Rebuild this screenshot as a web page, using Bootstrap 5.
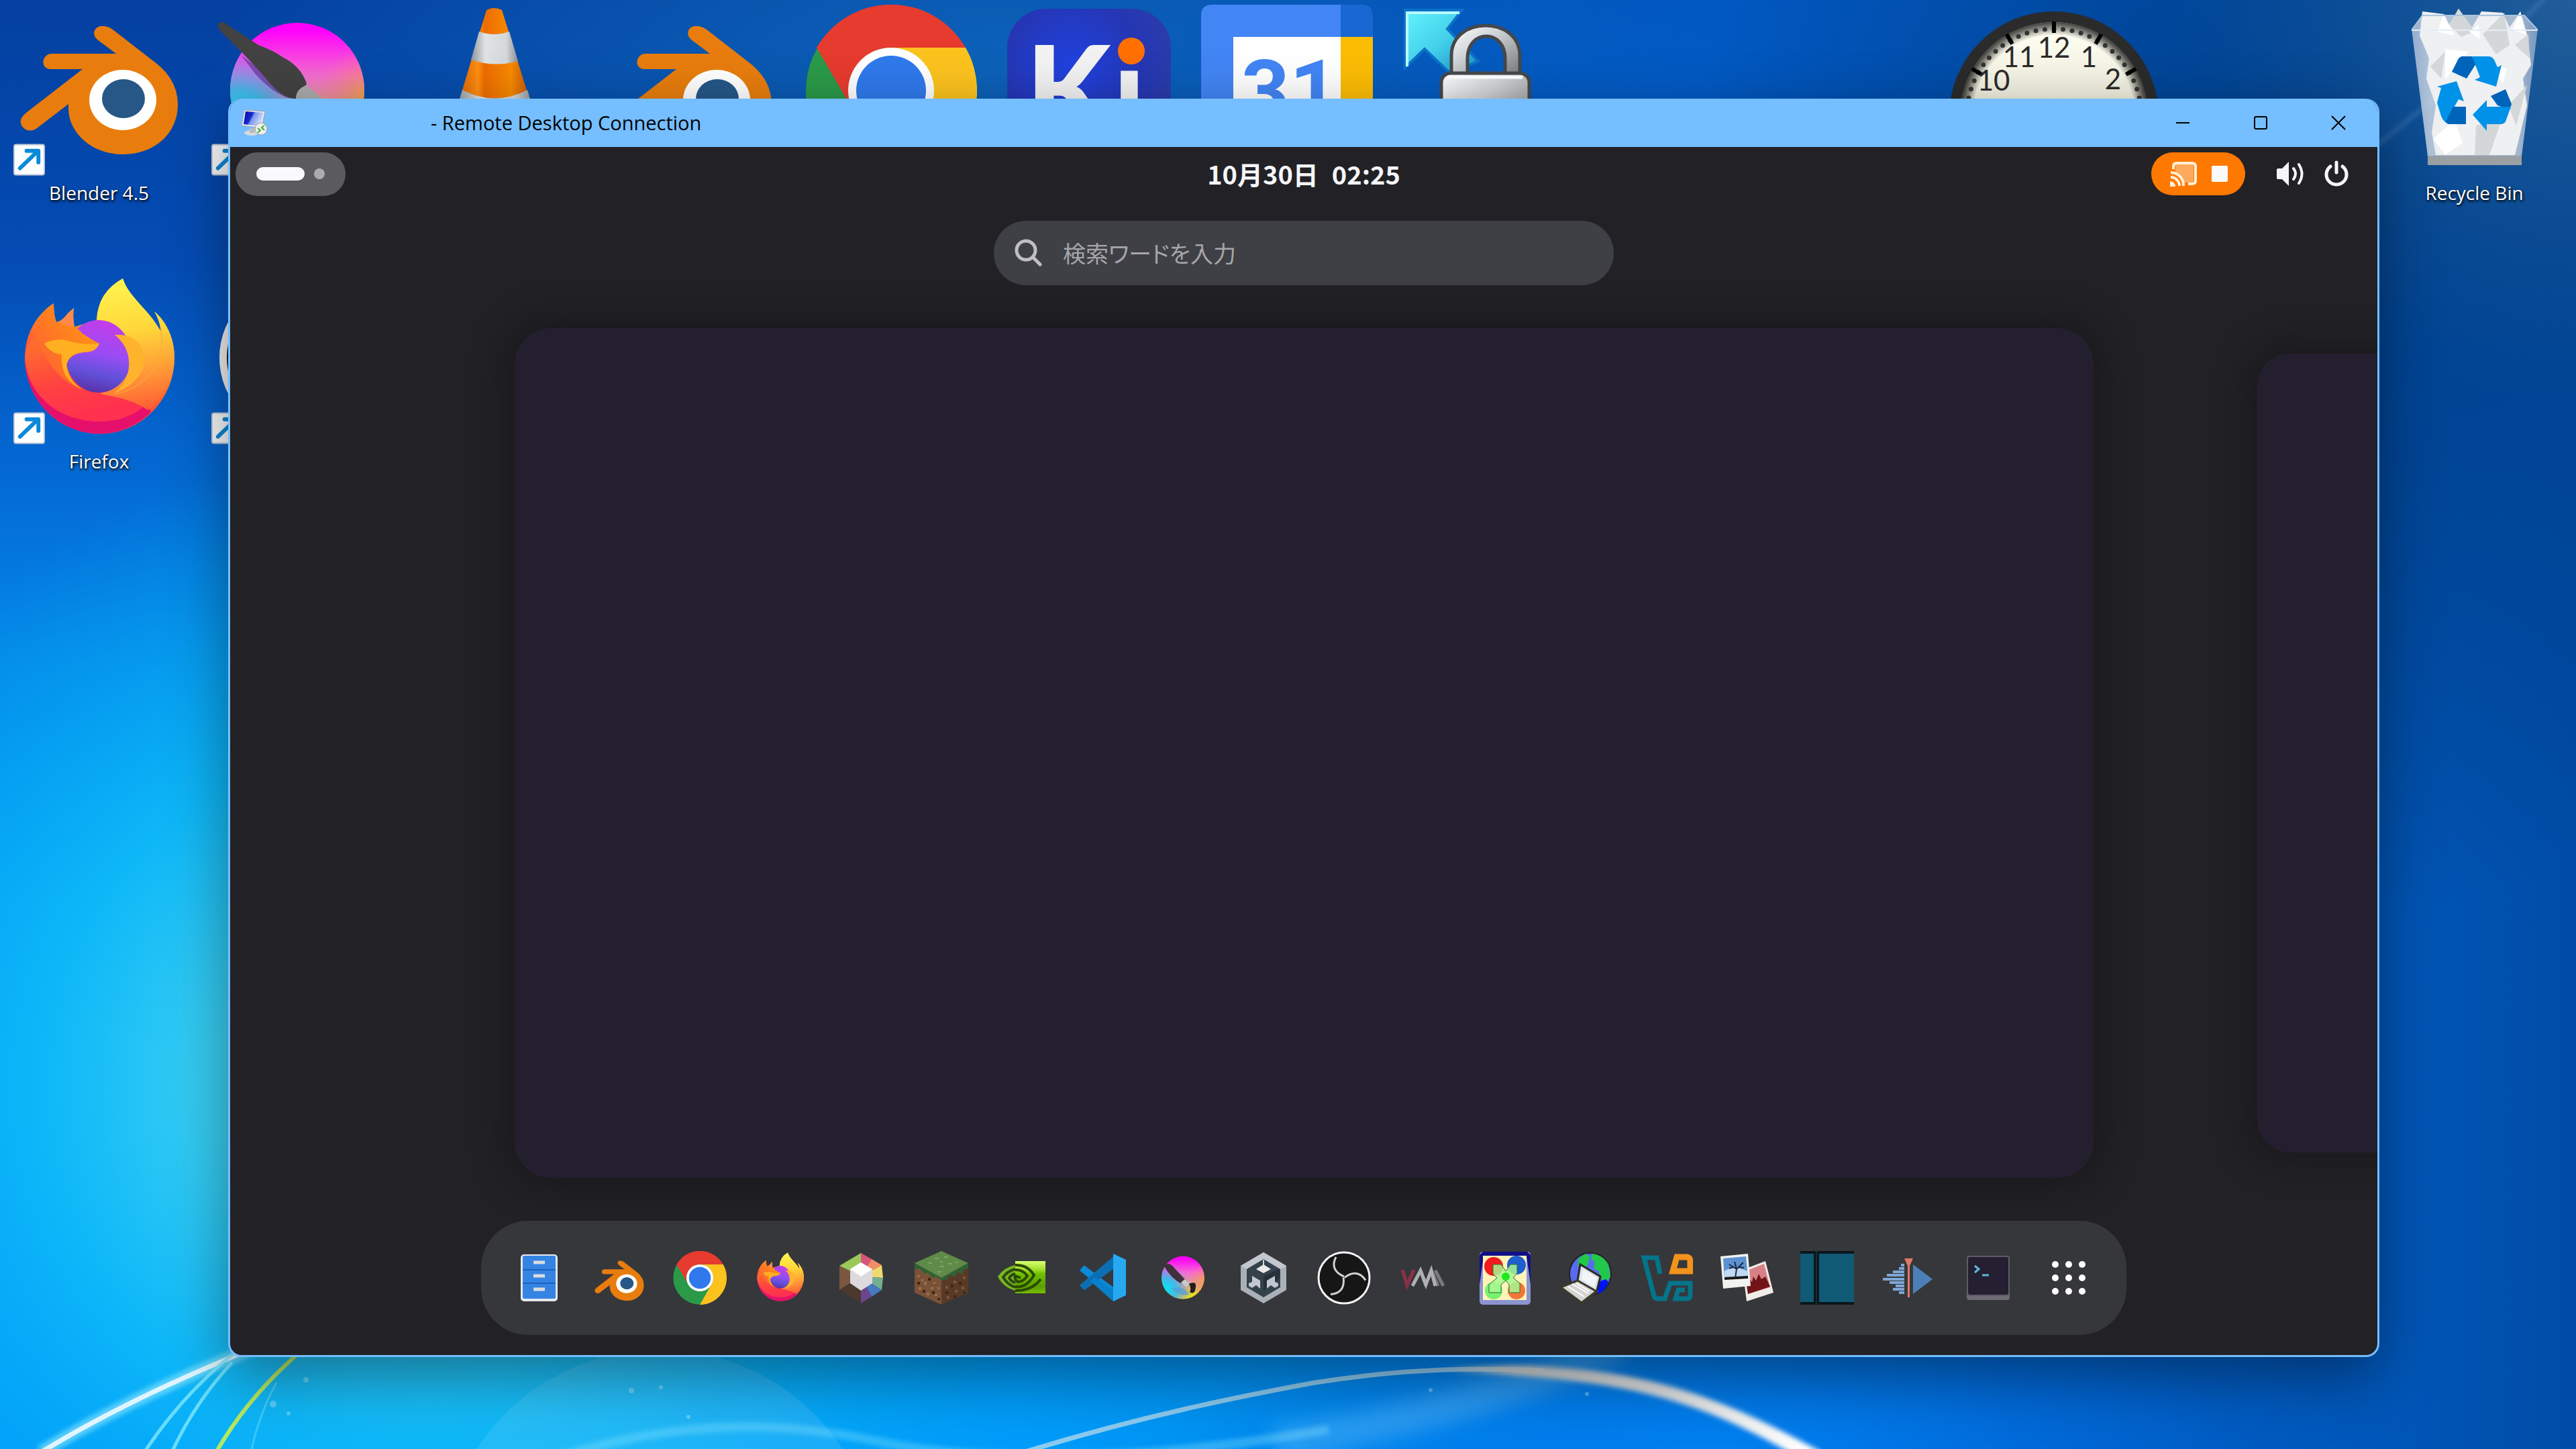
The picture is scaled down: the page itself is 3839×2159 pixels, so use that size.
<!DOCTYPE html>
<html lang="en">
<head>
<meta charset="utf-8">
<meta name="viewport" content="width=device-width, initial-scale=1">
<title>Remote Desktop Connection</title>
<link href="https://cdn.jsdelivr.net/npm/bootstrap@5.3.0/dist/css/bootstrap.min.css" rel="stylesheet">
<style>
  :root { --frame: #75beff; --shell: #222226; --light: #f6f6f9; }
  body { font-family: "Open Sans", "Noto Sans", sans-serif; background: #0a57b4; }
  .desktop { min-height: 100vh; }
  .wallpaper { inset: 0; width: 100%; height: 100%; }
  .icon-grid { display: grid; grid-template-columns: repeat(auto-fill, 295px); grid-auto-rows: 400px; padding-top: 7px; }
  .shortcut { color: #fff; font-size: 28px; line-height: 36px; text-shadow: 1px 2px 4px #000, 0 1px 2px rgba(0,0,0,.7); }
  .shortcut:hover { color: #fff; }
  .shortcut svg { width: 256px; height: 256px; overflow: visible; }
  .shortcut svg text { text-shadow: none; }
  .shortcut-name { margin-top: 6px; }
  .row-two { grid-row: 2; }
  .last-col { grid-column: -2; grid-row: 1; }
  .gadget { width: 312px; height: 312px; top: 17px; right: 622px; }
  .rdp { top: 147px; left: 340px; right: 293px; bottom: 137px; background: var(--shell); border: 3px solid var(--frame); border-top: 0; border-radius: 20px; box-shadow: 0 30px 90px 0 rgba(0,0,0,.42); }
  .titlebar { height: 72px; background: var(--frame); color: #000; font-size: 29px; padding-left: 16px; }
  .titlebar > svg { width: 40px; height: 40px; }
  .caption-text { margin-left: 243px; }
  .caption-btn { width: 116px; height: 72px; border: 0; background: transparent; padding: 0; }
  .caption-btn svg { display: block; margin: auto; width: 22px; height: 22px; }
  .shell { color: var(--light); }
  .topbar { height: 80px; padding: 0 8px; }
  .pill { width: 164px; height: 65px; background: #5b5b5f; border: 0; gap: 14px; }
  .pill-now { width: 72px; height: 20px; background: #fafafd; }
  .pill-next { width: 16px; height: 16px; background: #acacaf; }
  .shell-clock { font: 700 38px/48px "Noto Sans CJK JP", sans-serif; color: var(--light); gap: 20px; }
  .cast { width: 140px; height: 64px; background: #ff7800; border: 0; gap: 20px; }
  .cast svg, .status-icons svg { display: block; }
  .status-icons { border: 0; background: transparent; padding: 0; gap: 28px; margin-left: 45px; margin-right: 34px; }
  .finder { width: 924px; height: 96px; background: #3f4045; margin-top: 30px; padding: 0 30px; gap: 31px; }
  .finder input { background: transparent; border: 0; outline: 0; color: var(--light); font: 400 34px/48px "Noto Sans CJK JP", sans-serif; font-feature-settings: "palt"; }
  .finder input::placeholder { color: #a6a6aa; opacity: 1; }
  .workspaces { margin: 64px 0; padding-left: 13.25%; gap: 244px; }
  .space { flex: 0 0 84.75%; height: 100%; background: #241f2f; border: 0; border-radius: 54px; box-shadow: 0 0 52px 8px rgba(16,16,16,.55); }
  .space.smaller { height: 94%; border-radius: 48px; }
  .dash { height: 170px; background: #36373a; border-radius: 70px; padding: 0 46px; gap: 40px; margin-bottom: 30px; }
  .dash button { border: 0; background: transparent; padding: 0; width: 80px; height: 80px; }
  .dash svg { display: block; width: 80px; height: 80px; }
</style>
</head>
<body>
<svg class="position-absolute" width="0" height="0" aria-hidden="true">
  <defs>
    <linearGradient id="kr" x1="0" y1="0" x2="0" y2="1"><stop offset=".05" stop-color="#ff00fb"/><stop offset=".4" stop-color="#f470cf"/><stop offset=".6" stop-color="#e0a090"/><stop offset="1" stop-color="#e8f000"/></linearGradient>
    <radialGradient id="krc" gradientUnits="userSpaceOnUse" cx="40" cy="185" r="130"><stop offset="0" stop-color="#00e8f8"/><stop offset=".45" stop-color="#35b8f0" stop-opacity=".9"/><stop offset="1" stop-color="#b070ff" stop-opacity="0"/></radialGradient>
    <radialGradient id="kro" gradientUnits="userSpaceOnUse" cx="235" cy="140" r="80"><stop offset="0" stop-color="#f0a840"/><stop offset="1" stop-color="#ff6aa0" stop-opacity="0"/></radialGradient>
    <linearGradient id="ffb" x1=".75" y1="0" x2=".3" y2="1"><stop offset="0" stop-color="#ffe84a"/><stop offset=".3" stop-color="#ffa91f"/><stop offset=".55" stop-color="#ff6a2e"/><stop offset=".8" stop-color="#ff3647"/><stop offset="1" stop-color="#f01070"/></linearGradient>
    <linearGradient id="ffl" x1="0" y1=".2" x2=".3" y2="1"><stop offset="0" stop-color="#ff6a2e"/><stop offset=".5" stop-color="#ff4340"/><stop offset="1" stop-color="#ff3050"/></linearGradient>
    <linearGradient id="fff" x1=".4" y1="0" x2=".5" y2="1"><stop offset="0" stop-color="#fff44f"/><stop offset=".4" stop-color="#ffd63a"/><stop offset=".7" stop-color="#ffa037"/><stop offset="1" stop-color="#ff6035"/></linearGradient>
    <linearGradient id="ffh" x1="0" y1="1" x2="1" y2="0"><stop offset="0" stop-color="#ff5a38"/><stop offset=".5" stop-color="#ff7a22"/><stop offset="1" stop-color="#ffa313"/></linearGradient>
    <linearGradient id="ffg2" x1=".6" y1="0" x2=".4" y2="1"><stop offset="0" stop-color="#c53ce8"/><stop offset=".45" stop-color="#9a4cf5"/><stop offset=".75" stop-color="#6050d8"/><stop offset="1" stop-color="#5b30a8"/></linearGradient>
    <linearGradient id="vlc" x1="0" x2="1"><stop offset="0" stop-color="#d45500"/><stop offset=".3" stop-color="#ff9010"/><stop offset=".38" stop-color="#ee6c00"/><stop offset=".7" stop-color="#f98a00"/><stop offset="1" stop-color="#b84400"/></linearGradient>
    <linearGradient id="vlw" x1="0" x2="1"><stop offset="0" stop-color="#8e9499"/><stop offset=".3" stop-color="#e0e3e5"/><stop offset=".75" stop-color="#d4d8da"/><stop offset="1" stop-color="#8b8f92"/></linearGradient>
    <radialGradient id="ki" cx=".4" cy=".35" r=".7"><stop offset="0" stop-color="#1f42e0"/><stop offset=".6" stop-color="#2536b4"/><stop offset="1" stop-color="#2c3fa8"/></radialGradient>
    <linearGradient id="metal" x1="0" x2="1" y2="1"><stop offset="0" stop-color="#fff"/><stop offset=".4" stop-color="#cfd3d6"/><stop offset="1" stop-color="#77797c"/></linearGradient>
    <linearGradient id="arrow" x1="0" y1="0" x2="1" y2="1"><stop offset="0" stop-color="#62f4ff"/><stop offset=".5" stop-color="#44d0ea"/><stop offset="1" stop-color="#1a8fc8"/></linearGradient>
    <linearGradient id="face" x1="0" y1="0" x2="0" y2="1"><stop offset="0" stop-color="#fffff4"/><stop offset="1" stop-color="#d8d6bc"/></linearGradient>
    <radialGradient id="rim"><stop offset=".86" stop-color="#000" stop-opacity="0"/><stop offset="1" stop-color="#000" stop-opacity=".75"/></radialGradient>
    <linearGradient id="nv" x1="0" y1="0" x2="0" y2="1"><stop offset="0" stop-color="#d8ff70"/><stop offset=".25" stop-color="#a4e030"/><stop offset=".4" stop-color="#6fc000"/><stop offset=".8" stop-color="#5c9e00"/><stop offset="1" stop-color="#7ac000"/></linearGradient>
    <linearGradient id="scr" x1="0" y1="0" x2="1" y2=".4"><stop offset="0" stop-color="#0008a0"/><stop offset=".45" stop-color="#1528d0"/><stop offset=".55" stop-color="#7a94ec"/><stop offset="1" stop-color="#d0dcfa"/></linearGradient>
    <linearGradient id="bin" x1="0" x2="1"><stop offset="0" stop-color="#b5c4dc"/><stop offset=".15" stop-color="#d8e0ea"/><stop offset=".85" stop-color="#c8d0dc"/><stop offset="1" stop-color="#8fa6c8"/></linearGradient>

    <symbol id="i-blender" viewBox="0 0 256 256">
      <path d="M125 52C115 44 122 30 134 32Q141 32 148 37L215 89Q245 114 245 149C245 192 210 223 163 223C118 223 82 192 82 154V148L35 184C22 194 6 181 12 169Q14 165 19 161L103 96H55C40 96 41 73 58 73H153Z" fill="#e87d0d"/>
      <ellipse cx="163" cy="142" rx="50" ry="45" fill="#fff"/><ellipse cx="164" cy="140" rx="32" ry="29" fill="#265787"/>
    </symbol>
    <symbol id="i-chrome" viewBox="0 0 256 256">
      <circle cx="128" cy="128" r="127" fill="#2a9a49"/>
      <path d="M128 64H239A128 128 0 0 1 128 256L183 160A64 64 0 0 0 128 64Z" fill="#fcc31e"/>
      <path d="M17 64A128 128 0 0 1 239 64H128A64 64 0 0 0 73 160Z" fill="#e63b2e"/>
      <circle cx="128" cy="128" r="64" fill="#fff"/><circle cx="128" cy="128" r="52" fill="#2f79ec"/>
    </symbol>
    <symbol id="i-firefox" viewBox="0 0 256 256">
      <path d="M60 45Q60 62 64 73Q70 72 76 66Q82 58 90 52Q88 66 91 80L124 70Q126 28 163 8C172 36 200 52 220 87Q218 70 210 57C230 74 240 100 240 126A111 113 0 0 1 17 126C17 90 36 60 60 45Z" fill="url(#ffb)"/>
      <path d="M17 126A111 113 0 0 0 205 207L190 180Q150 214 90 190Z" fill="#e5106c"/>
      <path d="M17 126C20 180 66 221 128 221C176 221 212 196 222 150C205 176 180 180 150 180L60 130L36 90Q18 106 17 126Z" fill="url(#ffl)"/>
      <path d="M124 70Q126 28 163 8C172 36 200 52 220 87Q218 70 210 57C230 74 240 100 240 126C240 156 224 186 200 204C190 196 168 186 130 180L175 140Z" fill="url(#fff)"/>
      <path d="M220 87C226 130 200 172 150 180" fill="none" stroke="#ffa840" stroke-width="2" opacity=".6"/>
      <ellipse cx="127" cy="124" rx="49" ry="54" fill="url(#ffg2)"/>
      <path d="M151 92C180 90 195 108 195 130C195 150 175 172 150 178C172 166 186 120 151 92Z" fill="#ffb22c"/>
      <path d="M60 45Q60 62 64 73Q90 74 103 90Q115 98 128 105C124 114 118 118 104 118C88 120 80 128 79 140C82 156 92 168 102 173C80 165 60 150 40 110L30 84Q40 58 60 45Z" fill="url(#ffh)"/>
      <path d="M76 66Q82 58 90 52Q88 66 91 80L64 73Q70 72 76 66Z" fill="#ff8a4a"/>
      <path d="M46 105Q58 98 76 99Q100 108 128 105C124 114 118 117 104 118Q82 120 79 137C82 156 92 168 105 174C80 165 70 145 72 121Q56 120 46 105Z" fill="#ffb020"/>
    </symbol>
    <symbol id="i-shortcut" viewBox="0 0 48 48">
      <rect x="1" y="1" width="46" height="46" rx="3" fill="#fcfdfe" stroke="#c4c9d8" stroke-width="2"/>
      <path d="M10 37L35 13M20 10.500H38V28" fill="none" stroke="#0a8ad8" stroke-width="6" stroke-linejoin="round" stroke-linecap="round"/>
    </symbol>
  </defs>
</svg>

<main class="desktop position-relative overflow-hidden">
  <svg class="wallpaper position-absolute" viewBox="0 0 3839 2159" preserveAspectRatio="none" aria-hidden="true">
    <defs>
      <linearGradient id="sky" x1="0" y1="0" x2="0" y2="1"><stop offset="0" stop-color="#0440a0"/><stop offset=".18" stop-color="#044cb4"/><stop offset=".32" stop-color="#0468d2"/><stop offset=".46" stop-color="#0488e8"/><stop offset=".62" stop-color="#009cf4"/><stop offset=".85" stop-color="#009cfa"/><stop offset="1" stop-color="#009cfa"/></linearGradient>
      <linearGradient id="east" x1="0" x2="1"><stop offset=".4" stop-color="#0068d0" stop-opacity="0"/><stop offset=".6" stop-color="#0068d8" stop-opacity=".5"/><stop offset=".78" stop-color="#005cc8" stop-opacity=".9"/><stop offset=".93" stop-color="#0056b8"/><stop offset="1" stop-color="#004ca6"/></linearGradient>
      <radialGradient id="glow" gradientUnits="userSpaceOnUse" cx="0" cy="0" r="1" gradientTransform="translate(640 1620) scale(1050 960)"><stop offset="0" stop-color="#70e8f8"/><stop offset=".32" stop-color="#36cef4"/><stop offset=".55" stop-color="#10bcf8" stop-opacity=".85"/><stop offset="1" stop-color="#00a8f8" stop-opacity="0"/></radialGradient>
      <radialGradient id="topglow" gradientUnits="userSpaceOnUse" cx="0" cy="0" r="1" gradientTransform="translate(1500 100) scale(1200 500)"><stop offset="0" stop-color="#0c62b8"/><stop offset="1" stop-color="#0c62b8" stop-opacity="0"/></radialGradient>
      <radialGradient id="dusk" gradientUnits="userSpaceOnUse" cx="0" cy="0" r="1" gradientTransform="translate(3400 400) scale(900 1000)"><stop offset="0" stop-color="#003f8a" stop-opacity=".95"/><stop offset=".4" stop-color="#003f8a" stop-opacity=".7"/><stop offset="1" stop-color="#003a80" stop-opacity="0"/></radialGradient>
      <radialGradient id="haze" gradientUnits="userSpaceOnUse" cx="3839" cy="0" r="600"><stop offset="0" stop-color="#2a6498" stop-opacity=".8"/><stop offset="1" stop-color="#1a5490" stop-opacity="0"/></radialGradient>
      <radialGradient id="low" gradientUnits="userSpaceOnUse" cx="0" cy="0" r="1" gradientTransform="translate(2550 2159) scale(800 260)"><stop offset="0" stop-color="#0080f0"/><stop offset="1" stop-color="#0070e8" stop-opacity="0"/></radialGradient>
      <linearGradient id="fade" gradientUnits="userSpaceOnUse" x1="2150" y1="0" x2="2700" y2="0"><stop offset="0" stop-color="#d8dee2" stop-opacity="0"/><stop offset=".2" stop-color="#d0d4d6"/><stop offset=".6" stop-color="#e0e2e4"/><stop offset="1" stop-color="#fff"/></linearGradient>
      <filter id="soft" x="-20%" y="-20%" width="140%" height="140%"><feGaussianBlur stdDeviation="3"/></filter>
      <filter id="softer" x="-20%" y="-60%" width="140%" height="220%"><feGaussianBlur stdDeviation="14"/></filter>
    </defs>
    <rect width="3839" height="2159" fill="url(#sky)"/>
    <rect width="3839" height="2159" fill="url(#topglow)"/>
    <rect width="3839" height="2159" fill="url(#glow)"/>
    <rect width="3839" height="2159" fill="url(#east)"/>
    <rect width="3839" height="2159" fill="url(#dusk)"/>
    <rect width="3839" height="2159" fill="url(#haze)"/>
    <rect width="3839" height="2159" fill="url(#low)"/>
    <path d="M3500 250Q3680 110 3800 -10" stroke="#6f9cc8" stroke-opacity=".3" stroke-width="6" fill="none" filter="url(#soft)"/>
    <circle cx="983" cy="2336" r="325" fill="#c8f0ff" fill-opacity=".12"/>
    <path d="M1900 2150Q2180 2110 2420 2000" stroke="#80d0ff" stroke-opacity=".3" stroke-width="50" fill="none" filter="url(#softer)"/>
    <path d="M780 2190Q1040 2090 1300 2146T1980 2130" stroke="#90e8ff" stroke-opacity=".32" stroke-width="14" fill="none" filter="url(#soft)"/>
    <path d="M61 2164Q190 2085 370 2012" stroke="#8fe6ff" stroke-opacity=".6" stroke-width="20" fill="none" filter="url(#soft)"/>
    <path d="M61 2164Q190 2085 370 2012" stroke="#e0f5ff" stroke-width="7" fill="none"/>
    <path d="M215 2164Q270 2080 350 2015M256 2164Q290 2090 346 2030" stroke="#80e8ff" stroke-opacity=".8" stroke-width="5" fill="none"/>
    <path d="M322 2164Q370 2080 450 2012" stroke="#b6e860" stroke-width="6" fill="none"/>
    <path d="M374 2164Q385 2110 412 2060" stroke="#80e8ff" stroke-opacity=".4" stroke-width="3" fill="none"/>
    <path d="M1525 2164C1700 2110 1850 2080 1960 2060C2100 2038 2200 2038 2300 2042" stroke="#b8dcec" stroke-opacity=".75" stroke-width="7" fill="none"/>
    <path d="M2150 2038C2420 2026 2540 2070 2712 2164H2670C2530 2084 2420 2050 2150 2043Z" fill="url(#fade)" stroke="url(#fade)" stroke-opacity=".4" stroke-width="8" filter="url(#soft)"/>
    <g fill="#c0f0ff" fill-opacity=".4"><circle cx="407" cy="2092" r="5"/><circle cx="456" cy="2056" r="4"/><circle cx="941" cy="2072" r="4"/><circle cx="430" cy="2106" r="3"/><circle cx="985" cy="2067" r="3"/><circle cx="1026" cy="2111" r="3"/><circle cx="2132" cy="2071" r="3"/><circle cx="2365" cy="2077" r="3"/></g>
  </svg>

  <nav class="icon-grid position-relative" aria-label="Desktop">
    <a href="#" class="shortcut d-flex flex-column align-items-center text-decoration-none">
      <svg viewBox="0 0 256 256"><use href="#i-blender"/><use href="#i-shortcut" x="0" y="207" width="47" height="48"/></svg>
      <span class="shortcut-name">Blender 4.5</span>
    </a>
    <a href="#" class="shortcut d-flex flex-column align-items-center" aria-label="Krita">
      <svg viewBox="0 0 256 256">
        <circle cx="128" cy="127" r="100" fill="url(#kr)"/><circle cx="128" cy="127" r="100" fill="url(#kro)"/><circle cx="128" cy="127" r="100" fill="url(#krc)"/>
        <path d="M45 76L132 140L115 139Q92 132 66 104Z" fill="#5a2a90" opacity=".6"/>
        <path d="M10 34C8 24 18 24 24 30L70 60Q92 68 106 78Q134 92 142 118L126 140Q108 140 88 118Q60 84 14 40Z" fill="#424242"/>
        <path d="M141 120L165 140H126Q126 126 141 120Z" fill="#acacac"/>
        <use href="#i-shortcut" x="0" y="207" width="47" height="48"/>
      </svg>
    </a>
    <a href="#" class="shortcut d-flex flex-column align-items-center" aria-label="VLC">
      <svg viewBox="0 0 256 256">
        <path d="M115 8Q126 2 138 8L188 170H66Z" fill="url(#vlc)"/>
        <path d="M104 40Q127 48 149 40L162 84Q127 94 92 82Z" fill="url(#vlw)"/>
        <path d="M79 127Q127 152 176 127L186 160H69Z" fill="url(#vlw)"/>
      </svg>
    </a>
    <a href="#" class="shortcut d-flex flex-column align-items-center" aria-label="Blender"><svg viewBox="0 0 256 256"><use href="#i-blender"/></svg></a>
    <a href="#" class="shortcut d-flex flex-column align-items-center" aria-label="Chrome"><svg viewBox="0 0 256 256"><use href="#i-chrome"/></svg></a>
    <a href="#" class="shortcut d-flex flex-column align-items-center" aria-label="KiCad">
      <svg viewBox="0 0 256 256">
        <rect x="6" y="6" width="244" height="244" rx="58" fill="url(#ki)"/>
        <g font-family="Lato, sans-serif" font-weight="900" font-size="183" fill="#f2f2f2"><text x="34" y="193">K</text><text x="164" y="193">ı</text></g>
        <circle cx="191" cy="69" r="20" fill="#ff7000"/>
      </svg>
    </a>
    <a href="#" class="shortcut d-flex flex-column align-items-center" aria-label="Calendar">
      <svg viewBox="0 0 256 256">
        <path d="M16 0H208V48H48V256H0V16Q0 0 16 0Z" fill="#4285f4"/><path d="M208 0H240Q256 0 256 20V48H208Z" fill="#1967d2"/>
        <path d="M208 48H256V208H208Z" fill="#fbbc04"/><path d="M48 48H208V208H48Z" fill="#fff"/>
        <text x="132" y="172" text-anchor="middle" font-family="Roboto, sans-serif" font-weight="700" font-size="126" fill="#4285f4">31</text>
      </svg>
    </a>
    <a href="#" class="shortcut d-flex flex-column align-items-center" aria-label="Lock">
      <svg viewBox="0 0 256 256">
        <path d="M9 8H94L72 36L118 84L76 102L38 66L9 94Z" fill="url(#arrow)" stroke="#0b72c8" stroke-width="4"/><path d="M12 92V12H90" fill="none" stroke="#b8f8ff" stroke-width="4"/>
        <path d="M78 106V76C78 16 180 16 180 76V106H158V80C158 36 102 36 102 80V106Z" fill="url(#metal)" stroke="#45484b" stroke-width="5"/>
        <rect x="63" y="102" width="131" height="110" rx="14" fill="url(#metal)" stroke="#45484b" stroke-width="5"/><path d="M72 108H184" stroke="#fff" stroke-width="5"/>
      </svg>
    </a>
    <a href="#" class="shortcut last-col d-flex flex-column align-items-center text-decoration-none">
      <svg viewBox="0 0 256 256">
        <path d="M34 36L50 16H202L222 36L198 226V239H58V226Z" fill="url(#bin)" fill-opacity=".8"/>
        <path d="M50 10L82 14L90 30L104 6L124 34L138 10L170 12L180 34L196 10L206 44L212 90L200 110L206 150L194 200L188 224H70L64 190L70 150L56 110L60 80L46 46Z" fill="#eef0f2"/>
        <path d="M90 30L104 6L128 40L108 48ZM140 44L172 12L180 60L160 74ZM188 60L208 44L210 80ZM130 180L168 172L150 224H128ZM178 150L206 120L190 180ZM62 92L84 70L78 110Z" fill="#d4d7d8"/>
        <path d="M82 14L98 46L72 40ZM184 38L196 10L204 44ZM84 66L120 70L104 84L84 112ZM66 200L98 172L110 206L84 224ZM150 86L176 96L170 118ZM120 40L134 30L136 52Z" fill="#fff"/>
        <path d="M34 38H222" stroke="#e4edf5" stroke-width="2"/><path d="M34 38L50 16H202L222 38" fill="none" stroke="#a9c4dd" stroke-width="2"/>
        <path d="M58 225H198V239H58Z" fill="#9ba0a4"/>
        <path d="M94 100L104 80Q108 76 114 77L124 77L130 88L116 110Z" fill="#0064ba"/><path d="M124 77H148Q154 77 157 82L162 93L168 90L160 122L128 112L136 108Z" fill="#0091e8"/>
        <path d="M72 122L101 114L112 144L104 141L96 155L90 178Q82 176 78 166L72 146L78 124Z" fill="#0091e8"/><path d="M96 152H115V178H92Q86 178 85 174Z" fill="#0064ba"/>
        <path d="M174 126L183 148Q182 153 178 156L162 150L152 136Z" fill="#0064ba"/><path d="M125 164L146 142V152H182L174 174Q172 178 166 178H146V188Z" fill="#0091e8"/>
      </svg>
      <span class="shortcut-name">Recycle Bin</span>
    </a>
    <a href="#" class="shortcut row-two d-flex flex-column align-items-center text-decoration-none">
      <svg viewBox="0 0 256 256"><use href="#i-firefox"/><use href="#i-shortcut" x="0" y="207" width="47" height="48"/></svg>
      <span class="shortcut-name">Firefox</span>
    </a>
    <a href="#" class="shortcut row-two d-flex flex-column align-items-center" aria-label="OBS Studio">
      <svg viewBox="0 0 256 256"><circle cx="128" cy="126" r="116" fill="#f4f4f4"/><circle cx="128" cy="126" r="105" fill="#1c1c1e"/><use href="#i-shortcut" x="0" y="207" width="47" height="48"/></svg>
    </a>
  </nav>

  <svg class="gadget position-absolute" viewBox="-156 -156 312 312" role="img" aria-label="Clock">
    <circle r="156" fill="#2b2b2b"/><circle r="140" fill="url(#face)"/><circle r="140" fill="url(#rim)"/>
    <circle r="130" fill="none" stroke="#333" stroke-width="7" stroke-linecap="round" pathLength="60" stroke-dasharray="0 1"/>
    <g stroke="#000" stroke-width="6"><path d="M0 -141V-124"/><path d="M0 -141V-124" transform="rotate(30)"/><path d="M0 -141V-124" transform="rotate(60)"/><path d="M0 -141V-124" transform="rotate(-30)"/><path d="M0 -141V-124" transform="rotate(-60)"/></g>
    <g font-family="Lato, sans-serif" font-size="42" fill="#2b2b2b" text-anchor="middle"><text x="0" y="-87">12</text><text x="52" y="-73">1</text><text x="88" y="-40">2</text><text x="-52" y="-73">11</text><text x="-90" y="-38">10</text></g>
  </svg>

  <section class="rdp position-absolute d-flex flex-column overflow-hidden" aria-label="Remote Desktop Connection window">
    <header class="titlebar d-flex align-items-center flex-shrink-0">
      <svg viewBox="0 0 40 40" aria-hidden="true"><ellipse cx="16" cy="35" rx="11" ry="4" fill="#d8dade"/><path d="M12 28H22L20 35H13Z" fill="#b8bcc2"/><path d="M5 1L36 3L31 28L1 24Z" fill="#e8e8ec" stroke="#a0a4b0"/><path d="M7 3L33 5L29 25L4 22Z" fill="url(#scr)"/><circle cx="30" cy="29" r="9" fill="#eef0ee" stroke="#9a9e9a" stroke-width="1"/><path d="M25 28L29 31L25 35M35 24L31 27L35 31" fill="none" stroke="#3fae3a" stroke-width="2"/></svg>
      <span class="caption-text">- Remote Desktop Connection</span>
      <div class="d-flex ms-auto">
        <button class="caption-btn" aria-label="Minimize"><svg viewBox="0 0 22 22"><path d="M1 11H21" stroke="#000" stroke-width="2"/></svg></button>
        <button class="caption-btn" aria-label="Maximize"><svg viewBox="0 0 22 22"><rect x="2" y="2" width="18" height="18" rx="2" fill="none" stroke="#000" stroke-width="2"/></svg></button>
        <button class="caption-btn" aria-label="Close"><svg viewBox="0 0 22 22"><path d="M1 1L21 21M21 1L1 21" stroke="#000" stroke-width="2"/></svg></button>
      </div>
    </header>

    <div class="shell flex-grow-1 d-flex flex-column align-items-center overflow-hidden">
      <div class="topbar w-100 d-flex align-items-center flex-shrink-0">
        <div class="col"><button class="pill rounded-pill d-flex align-items-center justify-content-center" aria-label="Activities"><span class="pill-now rounded-pill"></span><span class="pill-next rounded-circle"></span></button></div>
        <div class="shell-clock d-flex"><span>10月30日</span><span>02:25</span></div>
        <div class="col d-flex align-items-center justify-content-end">
          <button class="cast rounded-pill d-flex align-items-center justify-content-center" aria-label="Stop screen sharing">
            <svg width="44" height="40" viewBox="0 0 44 40"><path d="M10 14V8Q10 6 12 6H35Q37 6 37 8V31Q37 33 35 33H24L10 19Z" fill="#ffa95c"/><path d="M7 13V9Q7 4 12 4H35Q40 4 40 9V30Q40 35 35 35H29" fill="none" stroke="#fff0d8" stroke-width="4"/><path d="M3 18A19 19 0 0 1 22 38M3 25A13 13 0 0 1 16 38" fill="none" stroke="#fff0d8" stroke-width="4"/><path d="M2 31A8 8 0 0 1 10 39H2Z" fill="#fff0d8"/></svg>
            <svg width="24" height="24" viewBox="0 0 24 24"><rect width="24" height="24" rx="2" fill="#fafafc"/></svg>
          </button>
          <button class="status-icons d-flex align-items-center" aria-label="System menu">
            <svg width="44" height="40" viewBox="0 0 44 40" fill="none" stroke="#f6f6f9" stroke-width="4" stroke-linecap="round"><path d="M2 14Q2 12 4 12H10L20 2V38L10 28H4Q2 28 2 26Z" fill="#f6f6f9" stroke="none"/><path d="M27 12Q33 20 27 28M35 6Q44 20 35 34"/></svg>
            <svg width="38" height="40" viewBox="0 0 38 40" fill="none" stroke="#f6f6f9" stroke-width="5" stroke-linecap="round"><path d="M19 3V18M10 9A15 15 0 1 0 28 9"/></svg>
          </button>
        </div>
      </div>

      <label class="finder rounded-pill d-flex align-items-center flex-shrink-0">
        <svg width="42" height="42" viewBox="0 0 42 42" fill="none" stroke="#c0c0c4" stroke-width="5" aria-hidden="true"><circle cx="18" cy="17" r="14"/><path d="M28 27L39 38" stroke-linecap="round"/></svg>
        <input class="flex-grow-1 p-0" type="text" placeholder="検索ワードを入力" lang="ja" aria-label="Search">
      </label>

      <div class="workspaces w-100 flex-grow-1 d-flex align-items-center">
        <button class="space" aria-label="Workspace 1"></button>
        <button class="space smaller" aria-label="Workspace 2"></button>
      </div>

      <nav class="dash d-flex align-items-center flex-shrink-0" aria-label="Dash">
        <button aria-label="Files"><svg viewBox="0 0 80 80"><rect x="13" y="5" width="55" height="70" rx="5" fill="#e4e8ee"/><rect x="16" y="7" width="49" height="64" rx="2" fill="#3584e4"/><path d="M16 28H65M16 48H65" stroke="#1c62bd" stroke-width="2"/><path d="M32 17H49M32 37H49M32 57H49" stroke="#d8dce0" stroke-width="5"/></svg></button>
        <button aria-label="Blender"><svg viewBox="0 0 256 256"><g transform="translate(0 14)"><use href="#i-blender" width="256" height="256"/></g></svg></button>
        <button aria-label="Chrome"><svg viewBox="0 0 256 256"><use href="#i-chrome"/></svg></button>
        <button aria-label="Firefox"><svg viewBox="0 0 256 256"><use href="#i-firefox"/></svg></button>
        <button aria-label="Prism Launcher"><svg viewBox="0 0 80 80"><path d="M40 38V3L8 22Z" fill="#9ac95a"/><path d="M40 38L8 22V58Z" fill="#7b5640"/><path d="M40 38L8 58L40 78Z" fill="#4c382d"/><path d="M40 38V3L56 12Z" fill="#d9557b"/><path d="M40 38L56 12L71 21Z" fill="#f38d68"/><path d="M40 38L71 21L73 40Z" fill="#f0da70"/><path d="M40 38L73 40L71 58Z" fill="#72b090"/><path d="M40 38L71 58L56 68Z" fill="#4779c0"/><path d="M40 38L56 68L40 78Z" fill="#6a478c"/><path d="M40 17L57 27V48L40 59L24 48V27Z" fill="#dcdadc"/><path d="M40 17L57 27L40 38L24 27Z" fill="#fff"/></svg></button>
        <button aria-label="Minecraft"><svg viewBox="0 0 80 80"><path d="M0 17L40 38V80L0 62Z" fill="#7a5238"/><path d="M80 17L40 38V80L80 62Z" fill="#593a26"/><path d="M40 0L80 18L40 40L0 18Z" fill="#5f8a48"/><path d="M0 18L40 40L80 18V26L72 28V34L62 32V38L50 36V42L40 44L32 38L26 40L20 32L14 34L8 26L0 28Z" fill="#2e6236"/><g fill="#9a7050"><path d="M4 36H8V39H4ZM14 46H18V50H14ZM24 54H28V57H24ZM6 54H10V58H6ZM30 64H34V67H30ZM18 62H22V66H18ZM10 42H13V45H10ZM28 46H31V49H28ZM34 54H37V57H34Z"/></g><g fill="#3c2517"><path d="M4 46H8V50H4ZM20 40H24V44H20ZM26 60H30V64H26ZM12 58H16V62H12ZM34 70H38V73H34ZM54 50H58V54H54ZM66 46H70V50H66ZM46 60H50V64H46ZM72 60H76V63H72ZM58 66H62V70H58Z"/></g><g fill="#7d5638"><path d="M46 52H50V56H46ZM58 44H62V48H58ZM72 38H76V42H72ZM60 58H64V62H60ZM48 67H52V71H48ZM70 53H74V57H70Z"/></g><g fill="#7da860"><path d="M30 10H36V12H30ZM44 8H50V10H44ZM50 18H56V20H50ZM20 17H26V19H20ZM38 22H44V24H38ZM34 30H40V32H34ZM38 15H42V17H38ZM60 16H64V18H60Z"/></g></svg></button>
        <button aria-label="NVIDIA Settings"><svg viewBox="0 0 80 80"><path d="M30 15H75V63H30Z" fill="url(#nv)"/><path d="M4 38Q14 24 30 21V59Q12 54 4 38Z" fill="#79b821"/><g fill="none" stroke-width="4"><path d="M30 27Q18 30 12 39Q18 50 30 54M30 34Q24 35 21 40Q24 46 30 47" stroke="#2f4a10"/><path d="M30 21Q48 20 58 36Q46 56 30 53M30 28Q42 28 48 37Q42 46 34 46Q28 42 30 37L38 40M30 59Q54 60 68 42" stroke="#2c4a00"/></g></svg></button>
        <button aria-label="Visual Studio Code"><svg viewBox="0 0 80 80"><path d="M6 29L12 22Q13 21 15 23L60 57V74Z" fill="#0a8ad8"/><path d="M6 51L12 58Q13 59 15 57L60 24V5Z" fill="#0b6fb4"/><path d="M56 75V4L75 13V66Z" fill="#27a9f2"/><path d="M56 75L22 45L28 40L56 58Z" fill="#0a80cc"/></svg></button>
        <button aria-label="Krita"><svg viewBox="0 0 256 256"><circle cx="128" cy="127" r="102" fill="url(#kr)"/><circle cx="128" cy="127" r="102" fill="url(#kro)"/><circle cx="128" cy="127" r="102" fill="url(#krc)"/><path d="M38 72Q60 46 88 82L142 140L120 156Q70 130 38 72Z" fill="#40303a"/><path d="M136 134L160 156L144 172L118 150Z" fill="#c8c8c8"/><path d="M156 156Q196 140 188 176Q184 210 160 196Q170 176 156 156Z" fill="#202020"/><path d="M74 180Q130 160 158 206Q120 222 74 180Z" fill="#50a0d8" opacity=".7"/></svg></button>
        <button aria-label="Unity Hub"><svg viewBox="0 0 80 80"><path d="M40 2L74 22V58L40 78L6 58V22Z" fill="#a9b0b7"/><path d="M40 2L74 22L40 40L6 22Z" fill="#c2c8ce"/><path d="M40 12L65 27V54L40 69L15 54V27Z" fill="#35424c"/><path d="M40 13V24" stroke="#d0d4d8" stroke-width="2"/><path d="M40 20L51 27L40 33L29 27Z" fill="#e8eaec"/><path d="M40 38L64 26V40L40 60Z" fill="#26313a"/><path d="M23 37L35 44V56L29 51L23 55L18 52V48L23 46ZM57 37L45 44V56L51 51L57 55L62 52V48L57 46Z" fill="#c2c8ce"/></svg></button>
        <button aria-label="OBS Studio"><svg viewBox="0 0 80 80"><circle cx="40" cy="40" r="38" fill="#161616" stroke="#f4f4f4" stroke-width="3"/><g fill="none" stroke="#d0d0d0" stroke-width="3"><path d="M40 38C26 32 21 22 28 9"/><path d="M40 38C26 32 21 22 28 9" transform="rotate(120 40 39)"/><path d="M40 38C26 32 21 22 28 9" transform="rotate(240 40 39)"/></g></svg></button>
        <button aria-label="Virtual Machine Manager"><svg viewBox="0 0 80 80" fill="none" stroke-width="5"><path d="M7 28L14 51L24 28" stroke="#8c3048"/><path d="M34 29L42 52M50 29L60 52M56 29L68 52" stroke="#7a7a7c"/><path d="M22 52L34 29L42 50L50 29L56 52" stroke="#b0b0b2"/></svg></button>
        <button aria-label="Puzzle"><svg viewBox="0 0 80 80"><rect x="2" y="1" width="76" height="79" rx="5" fill="#8c94d0"/><path d="M7 1H73L78 6V50L72 8H8L2 50V6Z" fill="#101088"/><rect x="7" y="7" width="65" height="66" fill="#fff4b8"/><circle cx="23" cy="23" r="14" fill="#f21c1c"/><circle cx="57" cy="21" r="14" fill="#1f5ed0"/><circle cx="23" cy="59" r="13" fill="#78f070"/><circle cx="57" cy="59" r="13" fill="#f2763a"/><path d="M22 20H34L41 30L48 20H58V33L52 40L62 48V62H46V50L41 44L34 50V62H16V50L28 40L22 34Z" fill="#a8f890" fill-opacity=".85" stroke="#287028" stroke-width="1"/><circle cx="41" cy="38" r="6" fill="#20e820"/></svg></button>
        <button aria-label="Remote Viewer"><svg viewBox="0 0 80 80"><circle cx="47" cy="34" r="31" fill="#5a6af0" stroke="#222" stroke-width="2"/><path d="M30 10L40 4L46 8L44 20L36 26L28 22ZM50 4Q66 6 74 20L77 38L70 48L62 40L60 30L52 26L54 16L48 12Z" fill="#22c84a"/><path d="M60 46L70 42L74 46Q70 60 58 64Z" fill="#0014f0"/><path d="M32 20L62 38L56 62L28 44Z" fill="#dfe3ea" stroke="#2a2a22" stroke-width="3"/><path d="M36 27L57 40L53 54L34 42Z" fill="#f2f6fa"/><path d="M28 44L56 60L34 77L3 54Z" fill="#d4d4d4" stroke="#3a3a2a" stroke-width="3"/><path d="M14 53L38 68M20 49L44 63M26 48L46 60" stroke="#fff" stroke-width="2"/></svg></button>
        <button aria-label="Virtual Bridge"><svg viewBox="0 0 80 80" fill="none" stroke-width="7"><path d="M31 34L26 10H7L22 67Q23 71 28 71H38L46 48H76V66Q76 71 70 71H54L58 58H68" stroke="#04758a"/><path d="M50 30L56 9H70Q76 9 76 16V30Z" stroke="#f2931c" stroke-width="9"/></svg></button>
        <button aria-label="Photos"><svg viewBox="0 0 80 80"><path d="M34 28L68 15L80 62L40 75Z" fill="#f0ede8"/><path d="M38 30L66 19L75 54L42 64Z" fill="#d88088"/><path d="M39 46L44 42L48 46L50 38L54 44L58 34L62 42L68 38L75 53L42 64Z" fill="#701418"/><path d="M1 8L42 4L46 52L5 56Z" fill="#f2f2ee"/><path d="M5 11L39 8L42 40L7 42Z" fill="#5c92d0"/><path d="M7 30Q20 20 41 30L42 40L7 42Z" fill="#c0d8f2"/><path d="M7 39L42 37V41L7 43Z" fill="#181818"/><path d="M23 40L25 27L14 20M25 27L35 17M25 27L22 16M20 24L14 26M29 24L36 25" fill="none" stroke="#1c2c44" stroke-width="2"/></svg></button>
        <button aria-label="Panels"><svg viewBox="0 0 80 80"><path d="M0 0H80V80H0Z" fill="#0b161b"/><path d="M0 4H20V76H0ZM28 4H80V76H28Z" fill="#115a75"/><path d="M24 0V80" stroke="#245" stroke-width="1"/></svg></button>
        <button aria-label="Audio Player"><svg viewBox="0 0 80 80"><path d="M48 20L77 42L48 64Z" fill="#4c7fb8"/><path d="M30 21H35M27 26H35M18 31H35M9 36H35M3 42H35M13 47H35M22 52H35M18 57H35M27 62H35" stroke="#7ea8d6" stroke-width="4"/><path d="M35 11H48L43 22V69H40V22Z" fill="#e07868"/></svg></button>
        <button aria-label="Terminal"><svg viewBox="0 0 80 80"><rect x="8" y="10" width="64" height="63" rx="4" fill="#6e6b74"/><rect x="8" y="7" width="64" height="60" rx="4" fill="#5e5b66"/><rect x="10" y="9" width="60" height="56" rx="3" fill="#241f31"/><path d="M20 22L26 27L20 32M31 36H41" fill="none" stroke="#62b8dc" stroke-width="3"/></svg></button>
        <button aria-label="Show Apps"><svg viewBox="0 0 80 80" fill="#fff"><circle cx="20" cy="20" r="5"/><circle cx="40" cy="20" r="5"/><circle cx="60" cy="20" r="5"/><circle cx="20" cy="40" r="5"/><circle cx="40" cy="40" r="5"/><circle cx="60" cy="40" r="5"/><circle cx="20" cy="60" r="5"/><circle cx="40" cy="60" r="5"/><circle cx="60" cy="60" r="5"/></svg></button>
      </nav>
    </div>
  </section>
</main>
<script src="https://cdn.jsdelivr.net/npm/bootstrap@5.3.0/dist/js/bootstrap.bundle.min.js"></script>
</body>
</html>
